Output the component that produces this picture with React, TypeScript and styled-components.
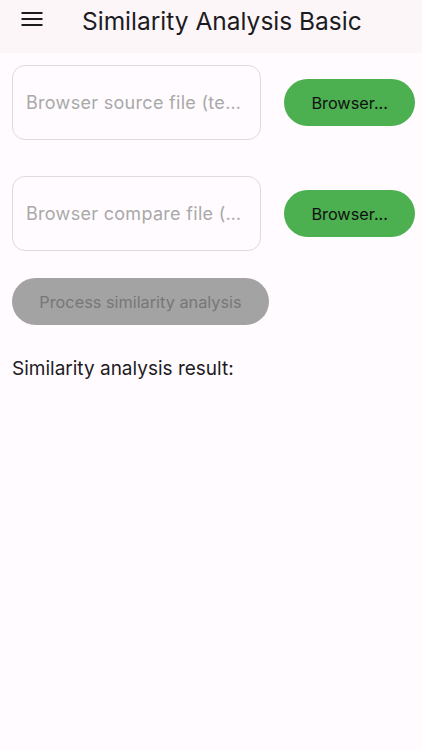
import React from "react";
import styled, { createGlobalStyle } from "styled-components";

const Global = createGlobalStyle`
  html, body { margin: 0; padding: 0; background: #fffbfe; }
  body { font-family: Inter, "Noto Sans", sans-serif; }
  * { box-sizing: border-box; }
`;

const Page = styled.div`
  width: 422px;
  min-height: 750px;
  background: #fffbfe;
  display: flex;
  flex-direction: column;
`;

const AppBar = styled.header`
  height: 53px;
  background: #fdf6f9;
  display: flex;
  align-items: center;
  padding-left: 20px;
  gap: 38px;
`;

const MenuButton = styled.button`
  width: 24px;
  height: 24px;
  padding: 0;
  border: none;
  background: transparent;
  display: flex;
  align-items: center;
  justify-content: center;
  margin-top: -15px;
`;

const Title = styled.h1`
  margin: 0;
  font-size: 24.5px;
  font-weight: 400;
  color: #1c1b1f;
  margin-top: -12px;
`;

const Content = styled.main`
  padding: 12px 7px 0 12px;
  display: flex;
  flex-direction: column;
`;

const FileRow = styled.div`
  display: flex;
  align-items: center;
  gap: 23px;
  margin-bottom: 36px;
`;

const Field = styled.div`
  width: 250px;
  height: 75px;
  border: 1px solid #dcdcdc;
  border-radius: 13px;
  background: #fffbfe;
  display: flex;
  align-items: center;
  padding: 0 10px 0 13px;
`;

const Placeholder = styled.span`
  font-size: 18px;
  color: #a9a9a9;
  white-space: nowrap;
  letter-spacing: 0.3px;
`;

const BrowseButton = styled.button`
  width: 131px;
  height: 47px;
  border: none;
  border-radius: 24px;
  background: #4caf50;
  color: #111;
  font-family: inherit;
  font-size: 16.3px;
  font-weight: 400;
`;

const ProcessButton = styled.button`
  width: 257px;
  height: 47px;
  border: none;
  border-radius: 24px;
  background: #a3a3a3;
  color: #777777;
  font-family: inherit;
  font-size: 16.3px;
  margin-top: -9px;
`;

const ResultLabel = styled.p`
  margin: 32px 0 0;
  font-size: 19px;
  color: #1c1b1f;
`;

const MenuIcon = () => (
  <svg width="24" height="24" viewBox="0 0 24 24">
    <path d="M1.5 6h21M1.5 12h21M1.5 18h21" stroke="#1c1b1f" strokeWidth="2.2" fill="none" />
  </svg>
);

export default function App() {
  return (
    <>
      <Global />
      <Page>
        <AppBar>
          <MenuButton aria-label="menu">
            <MenuIcon />
          </MenuButton>
          <Title>Similarity Analysis Basic</Title>
        </AppBar>
        <Content>
          <FileRow>
            <Field>
              <Placeholder>Browser source file (te…</Placeholder>
            </Field>
            <BrowseButton>Browser...</BrowseButton>
          </FileRow>
          <FileRow>
            <Field>
              <Placeholder>Browser compare file (…</Placeholder>
            </Field>
            <BrowseButton>Browser...</BrowseButton>
          </FileRow>
          <ProcessButton>Process similarity analysis</ProcessButton>
          <ResultLabel>Similarity analysis result:</ResultLabel>
        </Content>
      </Page>
    </>
  );
}
